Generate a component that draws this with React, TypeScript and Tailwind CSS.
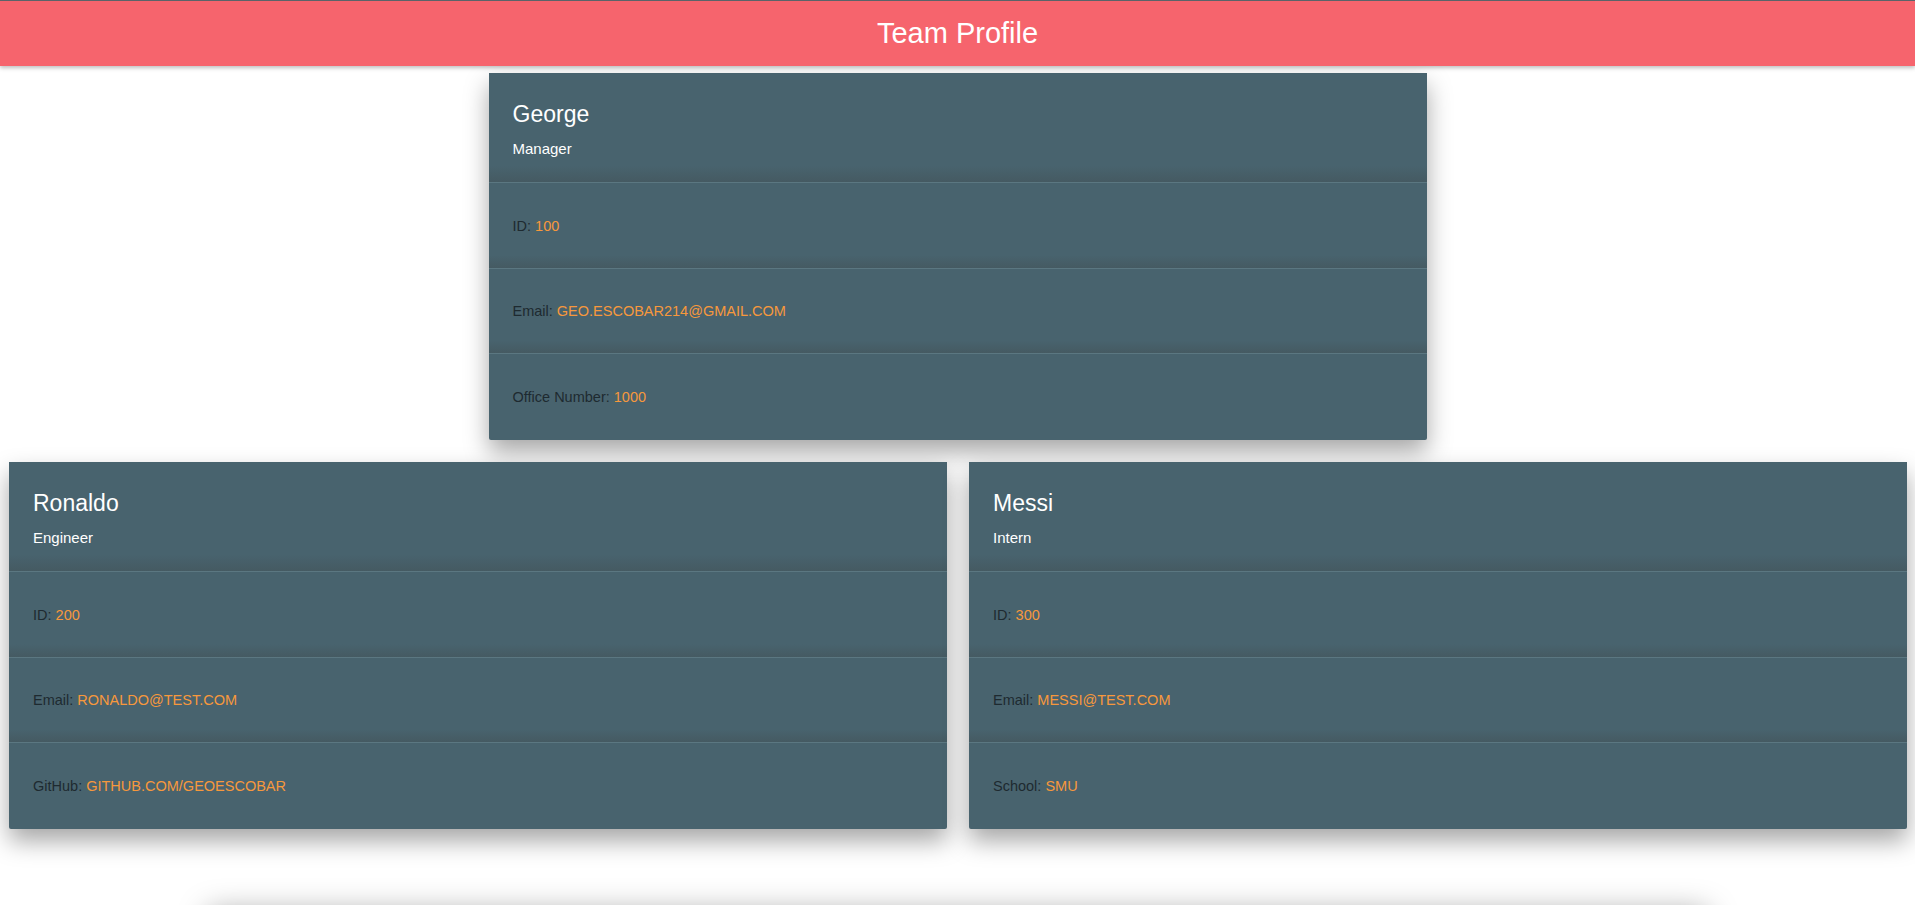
type Row = { label: string; value: string };

type Member = { name: string; role: string; rows: Row[] };

const george: Member = {
  name: "George",
  role: "Manager",
  rows: [
    { label: "ID", value: "100" },
    { label: "Email", value: "GEO.ESCOBAR214@GMAIL.COM" },
    { label: "Office Number", value: "1000" },
  ],
};

const others: Member[] = [
  {
    name: "Ronaldo",
    role: "Engineer",
    rows: [
      { label: "ID", value: "200" },
      { label: "Email", value: "RONALDO@TEST.COM" },
      { label: "GitHub", value: "GITHUB.COM/GEOESCOBAR" },
    ],
  },
  {
    name: "Messi",
    role: "Intern",
    rows: [
      { label: "ID", value: "300" },
      { label: "Email", value: "MESSI@TEST.COM" },
      { label: "School", value: "SMU" },
    ],
  },
];

// row heights from the screenshot: 86 / 85 / 86
const rowHeights = ["h-[86px]", "h-[85px]", "h-[86px]"];

const Card = ({ member }: { member: Member }) => {
  return (
    <div className="w-[938px] bg-[#48636e] rounded-[2px] shadow-[0_12px_24px_rgba(0,0,0,0.35)]">
      <div className="h-[110px] px-6 pt-[28px] bg-gradient-to-b from-[#48636e] from-85% to-[#455a62] border-b border-[#5b7781]">
        <h2 className="text-[23px] leading-[26px] font-light text-white">{member.name}</h2>
        <p className="mt-3 text-[15px] leading-5 text-white">{member.role}</p>
      </div>
      {member.rows.map((row, i) => (
        <div
          key={row.label}
          className={
            i < member.rows.length - 1
              ? `${rowHeights[i]} px-6 pt-[2px] flex items-center text-[14.5px] bg-gradient-to-b from-[#48636e] from-85% to-[#455a62] border-b border-[#5b7781]`
              : `${rowHeights[i]} px-6 pt-[2px] flex items-center text-[14.5px]`
          }
        >
          <span className="text-[#1e2a30]">{row.label}:&nbsp;</span>
          <span className="text-[#f7983c]">{row.value}</span>
        </div>
      ))}
    </div>
  );
};

export default function App() {
  return (
    <div className="min-h-screen bg-white overflow-hidden font-['Liberation_Sans',Arial,sans-serif]">
      <header className="h-[66px] bg-[#f6646d] border-t border-[#5b6369] flex items-center justify-center shadow-[0_2px_4px_rgba(0,0,0,0.25)] relative z-10">
        <h1 className="text-[29px] text-white leading-none">Team Profile</h1>
      </header>

      <main className="pt-[7px] flex flex-col gap-[22px]">
        <div className="flex justify-center">
          <Card member={george} />
        </div>
        <div className="flex gap-[22px] pl-[9px]">
          {others.map((m) => (
            <Card key={m.name} member={m} />
          ))}
        </div>
      </main>

      <footer className="mt-[82px] mx-auto w-[1500px] h-20 bg-white shadow-[0_0_30px_rgba(0,0,0,0.35)]" />
    </div>
  );
}
